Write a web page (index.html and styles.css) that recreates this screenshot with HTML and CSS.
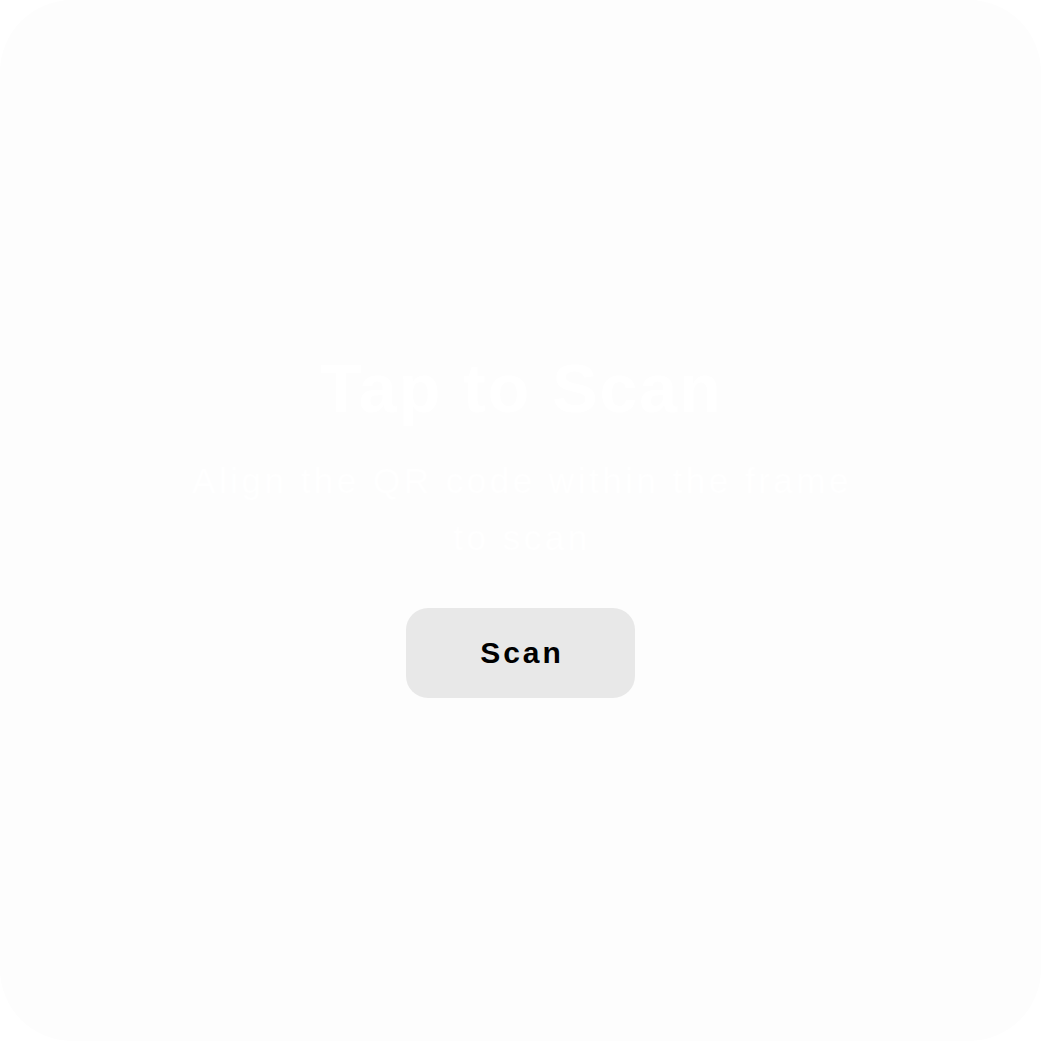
FILE: index.html
```html
<!DOCTYPE html>
<html lang="en">
<head>
<meta charset="utf-8">
<title>Tap to Scan</title>
<link rel="stylesheet" href="styles.css">
</head>
<body>
  <main class="screen">
    <section class="content">
      <h1 class="title">Tap to Scan</h1>
      <p class="subtitle">Align the QR code within the frame to scan</p>
      <button class="scan-btn" type="button">Scan</button>
    </section>
  </main>
</body>
</html>
```

FILE: styles.css
```css
html, body {
  margin: 0;
  padding: 0;
  background: #ffffff;
}

.screen {
  width: 1041px;
  height: 1041px;
  box-sizing: border-box;
  padding-top: 5px;
  border-radius: 72px;
  background: #fdfdfd;
  display: flex;
  align-items: center;
  justify-content: center;
  font-family: "Liberation Sans", Arial, sans-serif;
}

.content {
  display: flex;
  flex-direction: column;
  align-items: center;
  text-align: center;
  width: 690px;
}

.title {
  margin: 0;
  padding-left: 2px;
  font-size: 68px;
  font-weight: 700;
  letter-spacing: 2px;
  line-height: 80px;
  color: #ffffff;
}

.subtitle {
  margin: 24px 0 0;
  padding-left: 3px;
  font-size: 35px;
  font-weight: 400;
  letter-spacing: 3.5px;
  line-height: 57px;
  color: #ffffff;
}

.scan-btn {
  margin-top: 42px;
  width: 229px;
  height: 90px;
  border: none;
  border-radius: 22px;
  background: #e8e8e8;
  color: #000000;
  font-family: "Liberation Sans", Arial, sans-serif;
  font-size: 30px;
  font-weight: 700;
  letter-spacing: 3px;
  padding: 0 0 0 3px;
}
```
